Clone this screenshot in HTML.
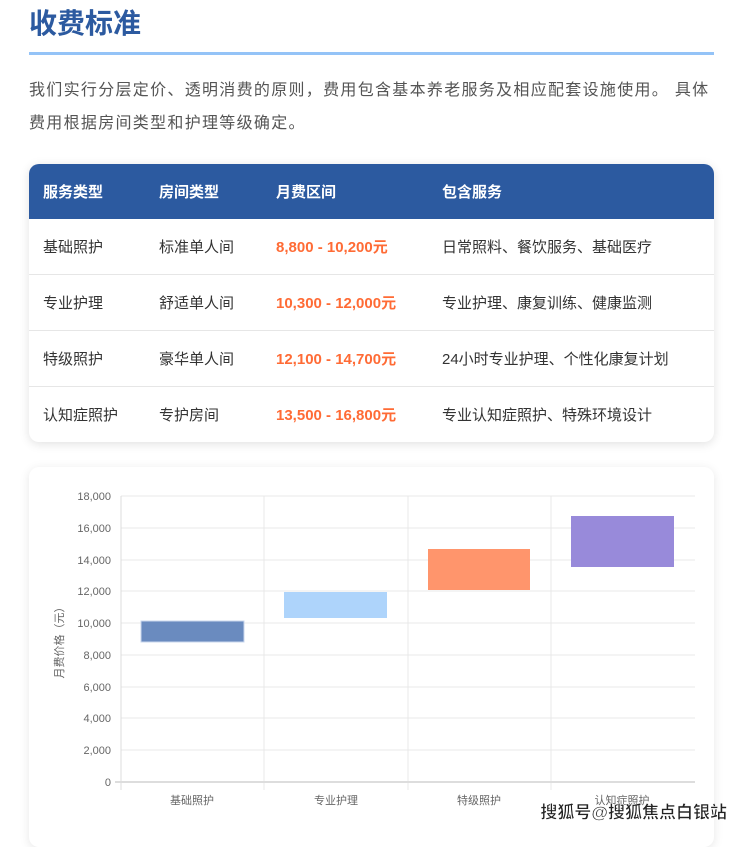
<!DOCTYPE html>
<html><head><meta charset="utf-8"><style>
body{margin:0;background:#fff;font-family:"Liberation Sans","Noto Sans CJK SC",sans-serif;width:740px;height:829px;overflow:hidden;position:relative}
h1{position:absolute;left:29px;top:2px;margin:0;font-size:28px;color:#2c5aa0;font-weight:bold}
.line{position:absolute;left:29px;top:52px;width:685px;height:3px;background:#94c3f7}
p{position:absolute;left:29px;top:74px;width:711px;margin:0;font-size:16px;line-height:33px;color:#555;letter-spacing:1.3px;white-space:nowrap}
.tbl{position:absolute;left:29px;top:164px;width:685px;border-radius:10px;overflow:hidden;box-shadow:0 2px 10px rgba(0,0,0,.12);background:#fff}
.row{height:55px;display:flex;align-items:center;border-bottom:1px solid #e6e6e6;font-size:15px;color:#333;position:relative}
.row span{position:absolute}
.hd{background:#2c5aa0;color:#fff;font-weight:bold;height:55px;border:none}
.c1{left:14px}.c2{left:130px}.c3{left:247px}.c4{left:413px}
.pr{color:#ff6b35;font-weight:bold}
.chart{position:absolute;left:29px;top:467px;width:685px;height:380px;border-radius:10px;box-shadow:0 2px 10px rgba(0,0,0,.1);background:#fff}
</style></head><body>
<h1>收费标准</h1>
<div class="line"></div>
<p>我们实行分层定价、透明消费的原则，费用包含基本养老服务及相应配套设施使用。 具体<br>费用根据房间类型和护理等级确定。</p>
<div class="tbl">
<div class="row hd"><span class="c1">服务类型</span><span class="c2">房间类型</span><span class="c3">月费区间</span><span class="c4">包含服务</span></div>
<div class="row"><span class="c1">基础照护</span><span class="c2">标准单人间</span><span class="c3 pr">8,800 - 10,200元</span><span class="c4">日常照料、餐饮服务、基础医疗</span></div>
<div class="row"><span class="c1">专业护理</span><span class="c2">舒适单人间</span><span class="c3 pr">10,300 - 12,000元</span><span class="c4">专业护理、康复训练、健康监测</span></div>
<div class="row"><span class="c1">特级照护</span><span class="c2">豪华单人间</span><span class="c3 pr">12,100 - 14,700元</span><span class="c4">24小时专业护理、个性化康复计划</span></div>
<div class="row" style="border:none"><span class="c1">认知症照护</span><span class="c2">专护房间</span><span class="c3 pr">13,500 - 16,800元</span><span class="c4">专业认知症照护、特殊环境设计</span></div>
</div>
<div class="chart"></div>
<svg style="position:absolute;left:0;top:0" width="740" height="829" font-family="Liberation Sans,Noto Sans CJK SC,sans-serif" font-size="11" fill="#666">
<g stroke="#e8e8e8" stroke-width="1">
<line x1="121" x2="695" y1="496" y2="496"/><line x1="121" x2="695" y1="528" y2="528"/><line x1="121" x2="695" y1="560" y2="560"/><line x1="121" x2="695" y1="591" y2="591"/><line x1="121" x2="695" y1="623" y2="623"/><line x1="121" x2="695" y1="655" y2="655"/><line x1="121" x2="695" y1="687" y2="687"/><line x1="121" x2="695" y1="718" y2="718"/><line x1="121" x2="695" y1="750" y2="750"/>
<line x1="264" x2="264" y1="496" y2="790"/><line x1="408" x2="408" y1="496" y2="790"/><line x1="551" x2="551" y1="496" y2="790"/><line x1="121" x2="121" y1="496" y2="790" stroke="#ddd"/>
<line x1="115" x2="695" y1="782" y2="782" stroke="#ddd" stroke-width="2"/>
</g>
<g text-anchor="end">
<text x="111" y="500">18,000</text><text x="111" y="532">16,000</text><text x="111" y="564">14,000</text><text x="111" y="595">12,000</text><text x="111" y="627">10,000</text><text x="111" y="659">8,000</text><text x="111" y="691">6,000</text><text x="111" y="722">4,000</text><text x="111" y="754">2,000</text><text x="111" y="786">0</text>
</g>
<text transform="translate(63,640) rotate(-90)" text-anchor="middle">月费价格（元）</text>
<rect x="141" y="621" width="103" height="21" fill="#6a8bbf" stroke="#c9d7ee"/>
<rect x="284" y="592" width="103" height="26" fill="#aed4fb"/>
<rect x="428" y="549" width="102" height="41" fill="#ff956c"/>
<rect x="571" y="516" width="103" height="51" fill="#988ada"/>
<g text-anchor="middle"><text x="192" y="804">基础照护</text><text x="336" y="804">专业护理</text><text x="479" y="804">特级照护</text><text x="622" y="804">认知症照护</text></g>
<text x="727" y="818" text-anchor="end" font-size="17" font-weight="bold" fill="#222" stroke="#fff" stroke-width="0.5">搜狐号@搜狐焦点白银站</text>
</svg>
</body></html>
